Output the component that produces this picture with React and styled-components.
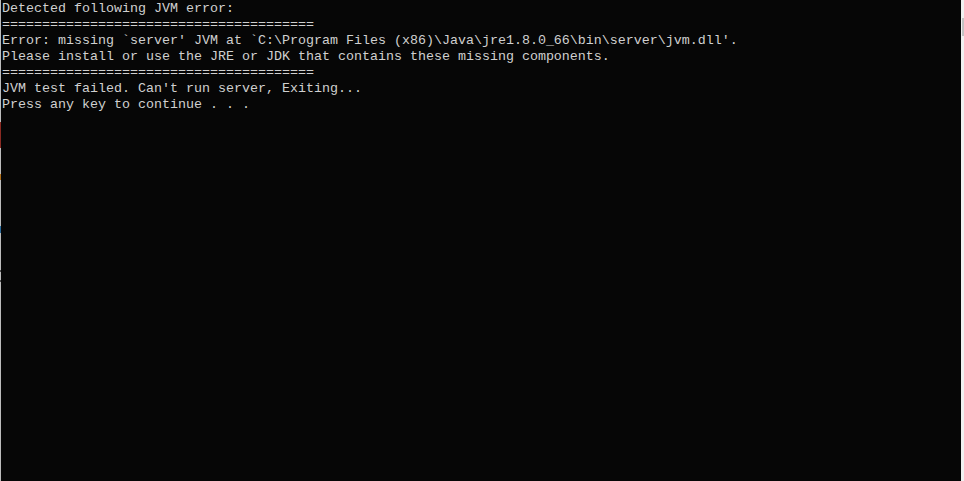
import React from "react";
import styled, { createGlobalStyle } from "styled-components";

const GlobalStyle = createGlobalStyle`
  html, body {
    margin: 0;
    padding: 0;
    background: #060606;
    overflow: hidden;
  }
`;

const Window = styled.div`
  display: flex;
  width: 964px;
  height: 481px;
  background: #060606;
`;

const Edge = styled.div`
  width: 1px;
  flex-shrink: 0;
  background: linear-gradient(
    to bottom,
    #bcbcbc 0px,
    #bcbcbc 122px,
    #8a2a22 122px,
    #8a2a22 148px,
    #bcbcbc 148px,
    #bcbcbc 174px,
    #b0701c 174px,
    #b0701c 180px,
    #bcbcbc 180px,
    #bcbcbc 226px,
    #2a6a9a 226px,
    #2a6a9a 233px,
    #bcbcbc 233px,
    #bcbcbc 270px,
    #505050 270px,
    #505050 272px,
    #bcbcbc 272px,
    #bcbcbc 280px,
    #505050 280px,
    #505050 282px,
    #bcbcbc 282px
  );
`;

const Screen = styled.pre`
  flex: 1;
  margin: 0;
  padding: 1px 0 0 1px;
  color: #d0d0d0;
  font-family: "Liberation Mono", "DejaVu Sans Mono", monospace;
  font-size: 13.333px;
  line-height: 16px;
  white-space: pre;
  overflow: hidden;
`;

const Scrollbar = styled.div`
  width: 3px;
  flex-shrink: 0;
  display: flex;
  flex-direction: column;
  background: #f0f0f0;
  padding-top: 18px;
`;

const Thumb = styled.div`
  height: 18px;
  margin-left: 1px;
  background: #c2c2c2;
`;

const lines = [
  "Detected following JVM error:",
  "=======================================",
  "Error: missing `server' JVM at `C:\\Program Files (x86)\\Java\\jre1.8.0_66\\bin\\server\\jvm.dll'.",
  "Please install or use the JRE or JDK that contains these missing components.",
  "=======================================",
  "JVM test failed. Can't run server, Exiting...",
  "Press any key to continue . . .",
];

export default function App() {
  return (
    <>
      <GlobalStyle />
      <Window>
        <Edge />
        <Screen>{lines.join("\n")}</Screen>
        <Scrollbar>
          <Thumb />
        </Scrollbar>
      </Window>
    </>
  );
}
